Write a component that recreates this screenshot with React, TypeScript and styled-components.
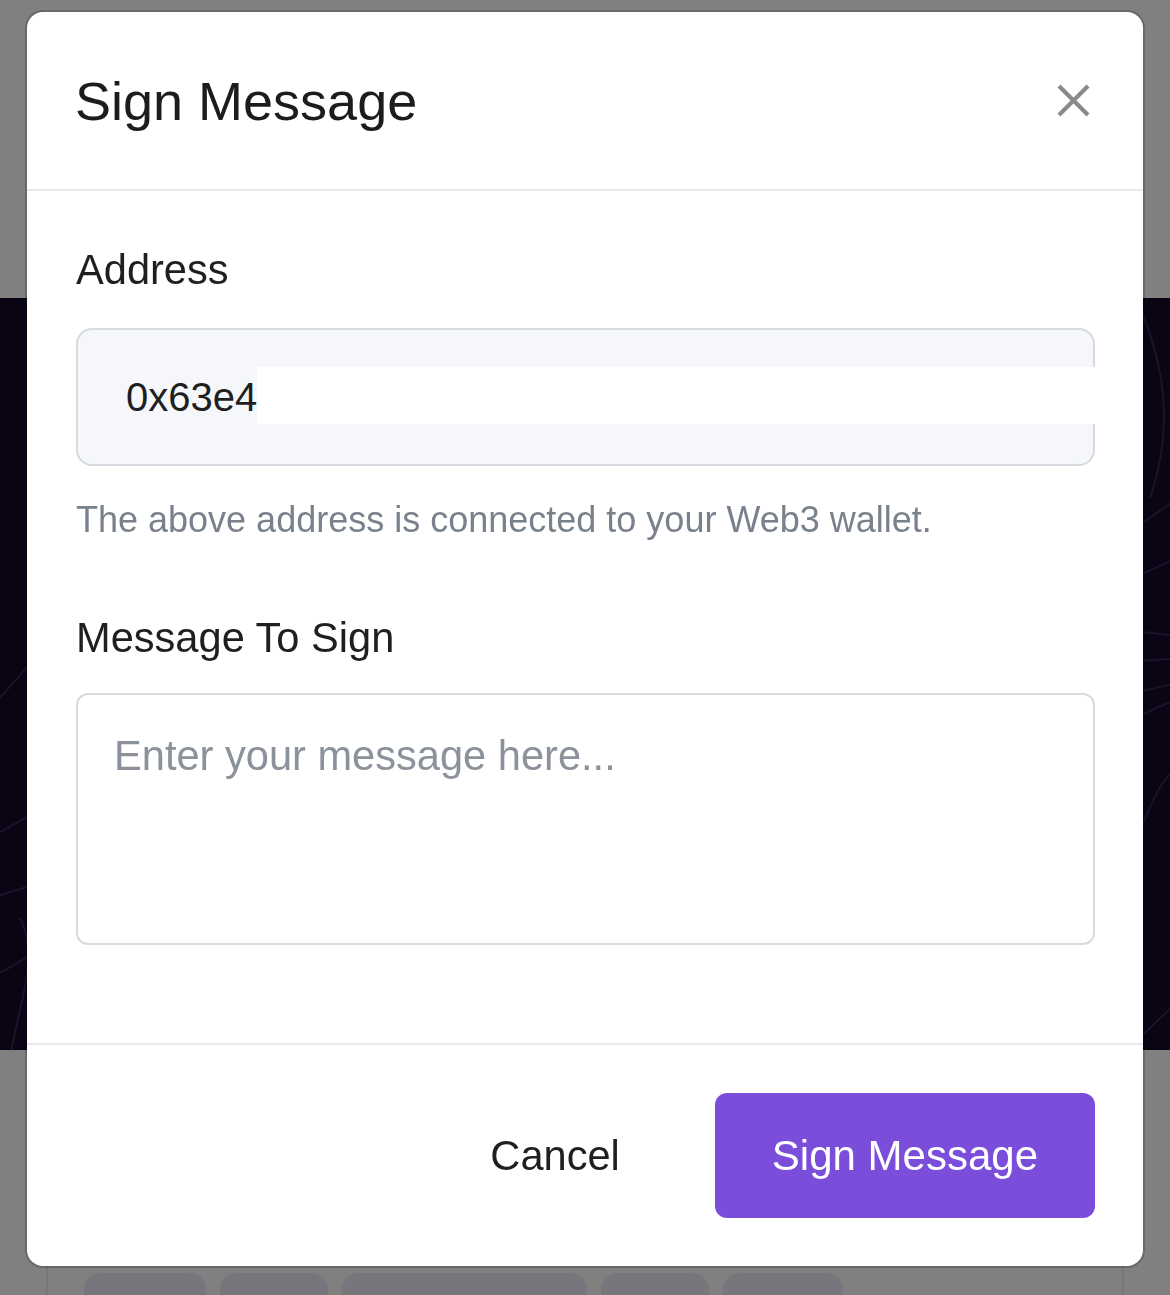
import React from "react";
import styled, { createGlobalStyle } from "styled-components";

const GlobalStyle = createGlobalStyle`
  html, body {
    margin: 0;
    padding: 0;
    background: #808080;
    overflow: hidden;
  }
  * {
    box-sizing: border-box;
  }
  body {
    font-family: "Liberation Sans", Arial, Helvetica, sans-serif;
  }
`;

const pills = [122, 108, 245, 108, 120];

function App() {
  return (
    <>
      <GlobalStyle />
      <Page>
        <TopArea />
        <Hero>
          <HeroLines viewBox="0 0 1170 752" preserveAspectRatio="none">
            <path d="M-20 420 C 40 360, 70 320, 90 250" />
            <path d="M-10 540 C 60 500, 120 470, 160 420" />
            <path d="M-10 600 C 60 580, 120 560, 170 520" />
            <path d="M-10 680 C 30 660, 60 640, 80 600" />
            <path d="M10 760 C 20 700, 40 660, 20 620" />
            <path d="M1140 10 C 1170 80, 1170 140, 1150 200" />
            <path d="M1120 240 C 1150 220, 1180 200, 1200 180" />
            <path d="M1115 290 C 1150 270, 1180 260, 1200 250" />
            <path d="M1110 330 C 1150 335, 1180 338, 1200 340" />
            <path d="M1110 365 C 1150 362, 1180 360, 1200 360" />
            <path d="M1115 400 C 1150 390, 1180 385, 1200 380" />
            <path d="M1120 430 C 1150 410, 1180 400, 1200 395" />
            <path d="M1125 560 C 1150 520, 1155 480, 1180 470" />
            <path d="M1140 740 C 1160 720, 1180 700, 1200 690" />
          </HeroLines>
        </Hero>
        <Lower>
          <Card>
            <PillRow>
              {pills.map((w, i) => (
                <Pill key={i} style={{ width: w }} />
              ))}
            </PillRow>
          </Card>
        </Lower>
      </Page>

      <Modal role="dialog" aria-label="Sign Message">
        <Header>
          <Title>Sign Message</Title>
          <CloseButton aria-label="Close">
            <svg width="33" height="33" viewBox="0 0 33 33">
              <path
                d="M2 2 L31 31 M31 2 L2 31"
                stroke="#8a8a8a"
                strokeWidth="4.2"
                fill="none"
              />
            </svg>
          </CloseButton>
        </Header>

        <Body>
          <Label>Address</Label>
          <AddressField>
            0x63e4
            <Redaction />
          </AddressField>
          <Helper>The above address is connected to your Web3 wallet.</Helper>

          <Label $spaced>Message To Sign</Label>
          <MessageInput placeholder="Enter your message here..." />
        </Body>

        <Footer>
          <CancelButton>Cancel</CancelButton>
          <PrimaryButton>Sign Message</PrimaryButton>
        </Footer>
      </Modal>
    </>
  );
}

const Page = styled.div`
  display: flex;
  flex-direction: column;
  height: 1295px;
  overflow: hidden;
`;

const TopArea = styled.div`
  flex-shrink: 0;
  height: 298px;
  background: #808080;
`;

const Hero = styled.div`
  position: relative;
  flex-shrink: 0;
  height: 752px;
  background: #0a0415;
  overflow: hidden;
`;

const HeroLines = styled.svg`
  position: absolute;
  inset: 0;
  width: 100%;
  height: 100%;

  path {
    fill: none;
    stroke: #1b1428;
    stroke-width: 2;
  }
`;

const Lower = styled.div`
  flex: 1 0 auto;
  padding: 0 46px;
`;

const Card = styled.div`
  height: 100%;
  border-left: 2px solid #777777;
  border-right: 2px solid #777777;
  padding: 223px 0 0 36px;
`;

const PillRow = styled.div`
  display: flex;
  gap: 14px;
`;

const Pill = styled.div`
  height: 40px;
  border-radius: 16px 16px 0 0;
  background: #78767c;
`;

const Modal = styled.div`
  position: fixed;
  top: 12px;
  left: 27px;
  width: 1116px;
  background: #ffffff;
  border-radius: 16px;
  box-shadow: 0 0 0 2px rgba(0, 0, 0, 0.18);
  overflow: hidden;
`;

const Header = styled.div`
  display: flex;
  align-items: center;
  justify-content: space-between;
  height: 179px;
  padding: 0 53px 0 48px;
  border-bottom: 2px solid #e7e9f1;
`;

const Title = styled.h2`
  margin: 0;
  font-size: 54px;
  font-weight: 400;
  line-height: 60px;
  color: #1c1c1c;
`;

const CloseButton = styled.button`
  display: flex;
  padding: 0;
  border: none;
  background: none;
  cursor: pointer;
`;

const Body = styled.div`
  display: flex;
  flex-direction: column;
  padding: 55px 48px 98px 49px;
`;

const Label = styled.div<{ $spaced?: boolean }>`
  font-size: 41.6px;
  line-height: 48px;
  color: #1f1f1f;
  margin: ${(p) => (p.$spaced ? "73px 0 31px" : "0 0 34px")};
`;

const AddressField = styled.div`
  position: relative;
  display: flex;
  align-items: center;
  height: 138px;
  padding: 0 48px;
  border: 2px solid #d6dae1;
  border-radius: 16px;
  background: #f6f7fa;
  font-size: 40px;
  color: #1f1f1f;
`;

const Redaction = styled.span`
  position: absolute;
  left: 179px;
  right: -2px;
  top: 37px;
  height: 57px;
  background: #ffffff;
`;

const Helper = styled.p`
  margin: 33px 0 0;
  font-size: 36px;
  line-height: 42px;
  color: #79818d;
`;

const MessageInput = styled.textarea`
  display: block;
  width: 100%;
  height: 252px;
  padding: 36px 36px;
  border: 2px solid #d6dae1;
  border-radius: 12px;
  background: #ffffff;
  font-family: "Liberation Sans", Arial, Helvetica, sans-serif;
  font-size: 41.6px;
  line-height: 50px;
  color: #1f1f1f;
  resize: none;
  outline: none;

  &::placeholder {
    color: #8b929c;
  }
`;

const Footer = styled.div`
  display: flex;
  justify-content: flex-end;
  align-items: center;
  gap: 47px;
  padding: 48px 48px 48px;
  border-top: 2px solid #e7e9f1;
`;

const CancelButton = styled.button`
  height: 125px;
  padding: 0 48px;
  border: none;
  background: none;
  font-family: inherit;
  font-size: 41.6px;
  color: #1f1f1f;
  cursor: pointer;
`;

const PrimaryButton = styled.button`
  height: 125px;
  padding: 0 57px;
  border: none;
  border-radius: 12px;
  background: #7b4ddb;
  font-family: inherit;
  font-size: 42px;
  color: #ffffff;
  cursor: pointer;
`;

export default App;
